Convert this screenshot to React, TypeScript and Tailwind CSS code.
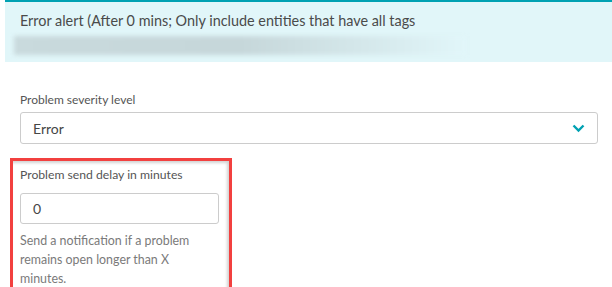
import React from 'react'

const font = { fontFamily: 'Lato, "Noto Sans", sans-serif' }

const App: React.FC = () => {
    return (
        <div className="w-[612px] h-[287px] overflow-hidden bg-white text-[#454646]" style={font}>
            {/* Summary banner */}
            <div className="ml-[5px] h-[62px] border-t-2 border-[#00a1b2] bg-[#e1f6f9] pt-[10px]">
                <p className="pl-[15px] text-[14.4px] leading-[18px] text-[#4a4b4b]">
                    Error alert (After 0 mins; Only include entities that have all tags
                </p>
                <div className="ml-[9px] mt-[6px] h-[19px] w-[452px] bg-gradient-to-r from-[#c9dadd] via-[#c6d7da] to-[#e1f6f9] blur-[2px]" />
            </div>

            <div className="px-[20px] pt-[30px]">
                <label className="block text-[12px] leading-[16px] text-[#555]">Problem severity level</label>
                <div className="mt-[4px] flex h-[32px] w-[578px] items-center justify-between rounded-[3px] border border-[#cccccc] pl-[12px] pr-[12px]">
                    <span className="text-[14px]">Error</span>
                    <svg width="13" height="9" viewBox="0 0 13 9" fill="none">
                        <path d="M1.5 1.5 L6.5 6.5 L11.5 1.5" stroke="#00a1b2" strokeWidth="2.4" />
                    </svg>
                </div>
            </div>

            {/* Highlighted field */}
            <div className="ml-[10px] mt-[14px] w-[222px] h-[140px] border-[3px] border-[#f2403f] shadow-[inset_-2px_2px_3px_rgba(0,0,0,0.18)] pl-[7px] pt-[6px]">
                <label className="block text-[12.2px] leading-[16px] text-[#555]">Problem send delay in minutes</label>
                <div className="mt-[10px] flex h-[31px] w-[199px] items-center rounded-[3px] border border-[#cccccc] pl-[12px]">
                    <span className="text-[14px]">0</span>
                </div>
                <p className="mt-[7px] w-[195px] text-[12.4px] leading-[19px] text-[#7a7a7a]">
                    Send a notification if a problem remains open longer than X minutes.
                </p>
            </div>
        </div>
    )
}

export default App
